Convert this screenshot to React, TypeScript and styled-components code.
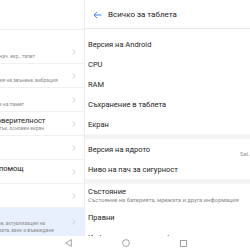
import React from 'react'
import styled, { createGlobalStyle } from 'styled-components'

const GlobalStyle = createGlobalStyle`
  html, body {
    margin: 0;
    padding: 0;
    background: #ffffff;
    overflow: hidden;
  }
  body {
    font-family: Roboto, "Noto Sans", sans-serif;
    -webkit-font-smoothing: antialiased;
  }
`

type LeftItem = {
  title: string
  sub?: string[]
  active?: boolean
}

const leftItems: LeftItem[] = [
  { title: 'Дисплей', sub: ['Яркост, теми, стил на нач. екр., тапет'] },
  { title: 'Звук', sub: ['Не безпокойте, мелодия на звънене, вибрация'] },
  { title: 'Памет', sub: ['Анализ, оптимизиране на памет'] },
  { title: 'Сигурност и поверителност', sub: ['Лице, пръстов отпечатък, основен екран'] },
  { title: 'Акаунти' },
  { title: 'Интелигентна помощ', sub: ['Достъпност'] },
  { title: 'Google', sub: ['Услуги на Google'] },
  {
    title: 'Система',
    sub: ['Навигация, архивиране, актуализации на', 'приложенията, системата, език и въвеждане'],
    active: true,
  },
]

type RightItem = {
  title: string
  sub?: string
  value?: string
}

const groups: RightItem[][] = [
  [
    { title: 'Версия на Android' },
    { title: 'CPU' },
    { title: 'RAM' },
    { title: 'Съхранение в таблета' },
    { title: 'Екран' },
  ],
  [
    { title: 'Версия на ядрото', value: 'Sat Jul 18 2020' },
    { title: 'Ниво на пач за сигурност' },
  ],
  [
    { title: 'Състояние', sub: 'Състояние на батерията, мрежата и друга информация' },
    { title: 'Правни' },
    { title: 'Информация за сертифицирането' },
  ],
]

const Chevron = () => (
  <svg width="4" height="6" viewBox="0 0 4 6">
    <polyline points="0.6,0.5 3.2,3 0.6,5.5" fill="none" stroke="#c9c9c9" strokeWidth="0.9" />
  </svg>
)

const BackArrow = () => (
  <svg width="9" height="8" viewBox="0 0 9 8">
    <path d="M8.5 4 H1 M4.2 0.8 L1 4 L4.2 7.2" fill="none" stroke="#3f86e6" strokeWidth="1" />
  </svg>
)

export default function App() {
  return (
    <>
      <GlobalStyle />
      <Root>
        <Main>
          <LeftPane>
            <LeftHeader />
            <LeftList>
              {leftItems.map((item) => (
                <LeftRow key={item.title} $active={item.active}>
                  <LeftText>
                    <LeftTitle>{item.title}</LeftTitle>
                    {item.sub?.map((line) => (
                      <LeftSub key={line}>{line}</LeftSub>
                    ))}
                  </LeftText>
                  <Chevron />
                </LeftRow>
              ))}
            </LeftList>
          </LeftPane>
          <RightPane>
            <RightHeader>
              <BackArrow />
              <HeaderTitle>Всичко за таблета</HeaderTitle>
            </RightHeader>
            {groups.map((group, i) => (
              <Group key={i}>
                {group.map((item) => (
                  <RightRow key={item.title} $tall={!!item.sub}>
                    <RightText>
                      <RightTitle>{item.title}</RightTitle>
                      {item.sub && <RightSub>{item.sub}</RightSub>}
                    </RightText>
                    {item.value && <RightValue>{item.value}</RightValue>}
                  </RightRow>
                ))}
              </Group>
            ))}
          </RightPane>
        </Main>
        <NavBar>
          <svg width="7" height="8" viewBox="0 0 7 8">
            <polygon points="6.3,0.6 6.3,7.4 0.7,4" fill="none" stroke="#9a9a9a" strokeWidth="0.9" />
          </svg>
          <svg width="8" height="8" viewBox="0 0 8 8">
            <circle cx="4" cy="4" r="3.4" fill="none" stroke="#9a9a9a" strokeWidth="0.9" />
          </svg>
          <svg width="7" height="7" viewBox="0 0 7 7">
            <rect x="0.5" y="0.5" width="6" height="6" fill="none" stroke="#9a9a9a" strokeWidth="0.9" />
          </svg>
        </NavBar>
      </Root>
    </>
  )
}

const Root = styled.div`
  width: 250px;
  height: 250px;
  overflow: hidden;
  display: flex;
  flex-direction: column;
  background: #ffffff;
`

const Main = styled.div`
  display: flex;
  height: 236px;
  flex: none;
  overflow: hidden;
`

const LeftPane = styled.div`
  flex: 0 0 140px;
  margin-left: -56px;
  display: flex;
  flex-direction: column;
  background: #ffffff;

  & > * {
    flex: none;
  }
`

const LeftHeader = styled.div`
  height: 29px;
  border-bottom: 1px solid #ececec;
  margin-bottom: 10px;
`

const LeftList = styled.div`
  display: flex;
  flex-direction: column;
`

const LeftRow = styled.div<{ $active?: boolean }>`
  flex: none;
  display: flex;
  align-items: center;
  justify-content: space-between;
  height: ${(p) => (p.$active ? 28 : 24)}px;
  padding: 0 8px 0 4px;
  border-bottom: ${(p) => (p.$active ? 'none' : '1px solid #f0f0f0')};
  box-sizing: border-box;
  background: ${(p) => (p.$active ? '#e7f0fc' : '#ffffff')};

  svg {
    flex: none;
  }
`

const LeftText = styled.div`
  display: flex;
  flex-direction: column;
  min-width: 0;
  white-space: nowrap;
`

const LeftTitle = styled.div`
  font-size: 7.5px;
  line-height: 9px;
  color: #1c1c1c;
`

const LeftSub = styled.div`
  font-size: 5px;
  line-height: 7px;
  color: #8c8c8c;
`

const RightPane = styled.div`
  flex: 0 0 270px;
  display: flex;
  flex-direction: column;
  border-left: 1px solid #ebebeb;
  background: #f4f4f4;

  & > * {
    flex: none;
  }
`

const RightHeader = styled.div`
  height: 29px;
  display: flex;
  align-items: center;
  gap: 6px;
  padding: 1px 0 0 8px;
  box-sizing: border-box;
  background: #ffffff;
  border-bottom: 1px solid #e6e6e6;
`

const HeaderTitle = styled.div`
  font-size: 8px;
  color: #1a1a1a;
  white-space: nowrap;
`

const Group = styled.div`
  background: #ffffff;
  display: flex;
  flex-direction: column;
  padding-top: 5px;
  margin-bottom: 5px;

  & + & {
    padding-top: 0;
  }
`

const RightRow = styled.div<{ $tall?: boolean }>`
  flex: none;
  display: flex;
  align-items: flex-end;
  height: ${(p) => (p.$tall ? 23 : 20)}px;
  padding: 0 0 0 3px;
  box-sizing: border-box;
`

const RightText = styled.div`
  flex: 0 0 152px;
  align-self: center;
  display: flex;
  flex-direction: column;
  white-space: nowrap;
`

const RightTitle = styled.div`
  font-size: 7.5px;
  line-height: 9px;
  color: #1c1c1c;
`

const RightSub = styled.div`
  font-size: 5.8px;
  line-height: 8px;
  color: #8a8a8a;
`

const RightValue = styled.div`
  font-size: 5.4px;
  line-height: 8px;
  color: #8f8f8f;
  white-space: nowrap;
  padding-bottom: 1px;
`

const NavBar = styled.div`
  height: 14px;
  flex: none;
  display: flex;
  align-items: center;
  justify-content: center;
  gap: 50px;
  background: #ffffff;
  padding-left: 1px;
`
